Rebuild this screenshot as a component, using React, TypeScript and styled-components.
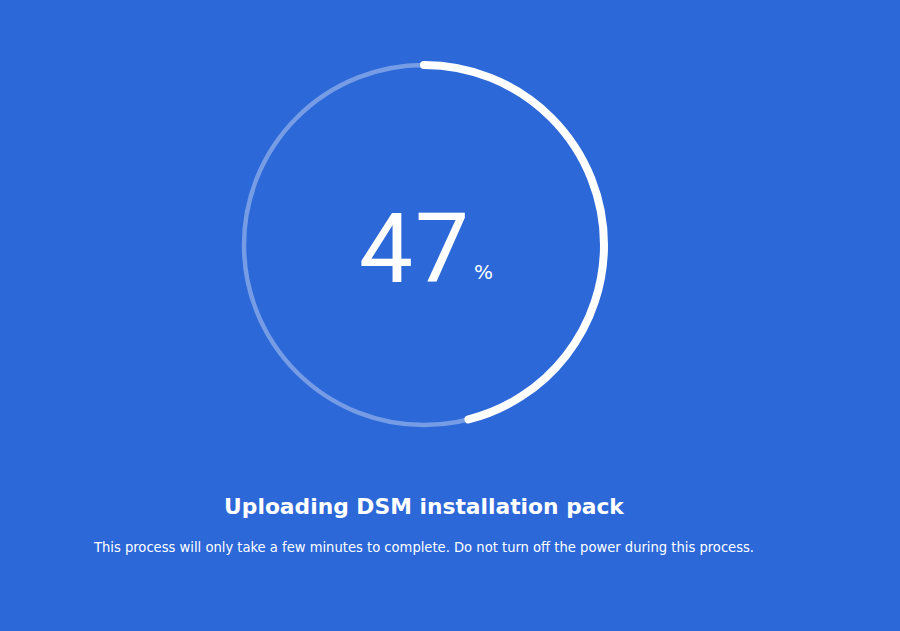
import React from "react";
import styled, { createGlobalStyle } from "styled-components";

const Global = createGlobalStyle`
  html, body { margin: 0; padding: 0; background: #2c68d8; }
  body { width: 900px; height: 631px; overflow: hidden; }
`;

const Page = styled.div`
  width: 848px;
  height: 631px;
  display: flex;
  flex-direction: column;
  align-items: center;
  padding-top: 60px;
  box-sizing: border-box;
  color: #fff;
`;

const RingWrap = styled.div`
  position: relative;
  width: 370px;
  height: 370px;
`;

const Ring = styled.svg`
  display: block;
`;

const Value = styled.div`
  position: absolute;
  inset: 0;
  display: flex;
  align-items: center;
  justify-content: center;
  padding: 8px 0 0 4px;
`;

const Number = styled.span`
  font-family: Roboto, "Liberation Sans", sans-serif;
  font-size: 96px;
  font-weight: 400;
  line-height: 1;
  letter-spacing: 2px;
`;

const Percent = styled.span`
  font-family: "DejaVu Sans", Verdana, sans-serif;
  font-size: 20px;
  align-self: flex-end;
  margin: 0 0 146px 3px;
`;

const Title = styled.h1`
  margin: 64px 0 0;
  font-family: "DejaVu Sans", Verdana, sans-serif;
  font-weight: bold;
  font-size: 21.8px;
  line-height: 26px;
`;

const Subtitle = styled.p`
  margin: 18px 0 0;
  font-family: "DejaVu Sans Condensed", "DejaVu Sans", sans-serif;
  font-size: 14.6px;
  line-height: 18px;
`;

export default function App() {
  const progress = 47;
  const r = 180;
  const c = 2 * Math.PI * r;
  const drawn = 0.46;
  return (
    <>
      <Global />
      <Page>
        <RingWrap>
          <Ring width="370" height="370" viewBox="0 0 370 370">
            <circle cx="185" cy="185" r={r} fill="none" stroke="rgba(255,255,255,0.35)" strokeWidth="4.5" />
            <circle
              cx="185"
              cy="185"
              r={r}
              fill="none"
              stroke="#fff"
              strokeWidth="8"
              strokeLinecap="round"
              strokeDasharray={`${c * drawn} ${c}`}
              transform="rotate(-90 185 185)"
            />
          </Ring>
          <Value>
            <Number>{progress}</Number>
            <Percent>%</Percent>
          </Value>
        </RingWrap>
        <Title>Uploading DSM installation pack</Title>
        <Subtitle>This process will only take a few minutes to complete. Do not turn off the power during this process.</Subtitle>
      </Page>
    </>
  );
}
